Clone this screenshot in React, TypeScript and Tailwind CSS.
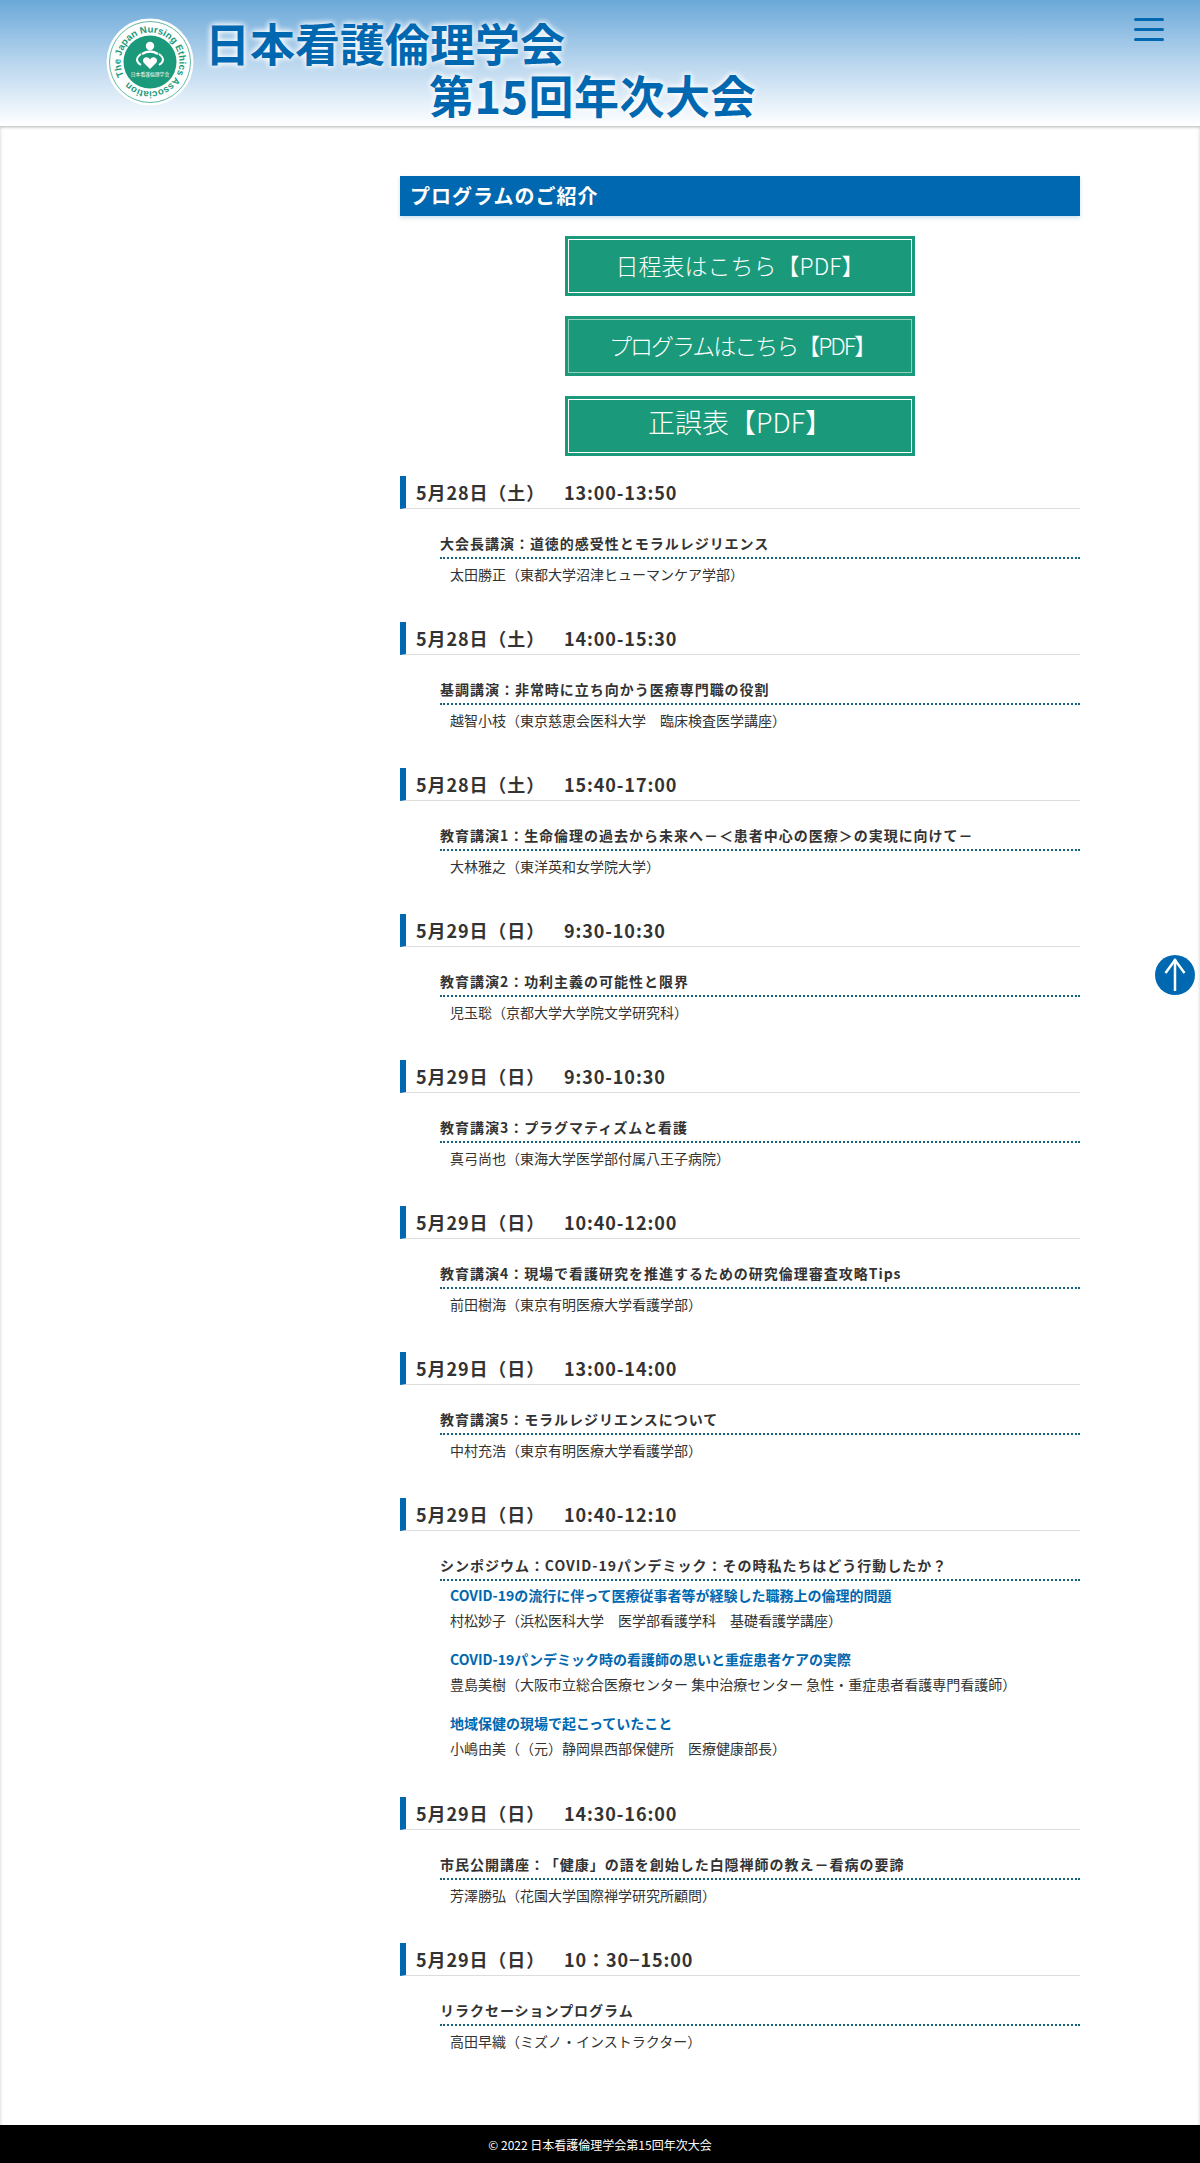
import React from "react";

type Talk = {
  title: string;
  name: string;
};

type Session = {
  date: string;
  time: string;
  title: string;
  name?: string;
  talks?: Talk[];
};

const sessions: Session[] = [
  { date: "5月28日（土）", time: "13:00-13:50", title: "大会長講演：道徳的感受性とモラルレジリエンス", name: "太田勝正（東都大学沼津ヒューマンケア学部）" },
  { date: "5月28日（土）", time: "14:00-15:30", title: "基調講演：非常時に立ち向かう医療専門職の役割", name: "越智小枝（東京慈恵会医科大学　臨床検査医学講座）" },
  { date: "5月28日（土）", time: "15:40-17:00", title: "教育講演1：生命倫理の過去から未来へ－＜患者中心の医療＞の実現に向けて－", name: "大林雅之（東洋英和女学院大学）" },
  { date: "5月29日（日）", time: "9:30-10:30", title: "教育講演2：功利主義の可能性と限界", name: "児玉聡（京都大学大学院文学研究科）" },
  { date: "5月29日（日）", time: "9:30-10:30", title: "教育講演3：プラグマティズムと看護", name: "真弓尚也（東海大学医学部付属八王子病院）" },
  { date: "5月29日（日）", time: "10:40-12:00", title: "教育講演4：現場で看護研究を推進するための研究倫理審査攻略Tips", name: "前田樹海（東京有明医療大学看護学部）" },
  { date: "5月29日（日）", time: "13:00-14:00", title: "教育講演5：モラルレジリエンスについて", name: "中村充浩（東京有明医療大学看護学部）" },
  {
    date: "5月29日（日）",
    time: "10:40-12:10",
    title: "シンポジウム：COVID-19パンデミック：その時私たちはどう行動したか？",
    talks: [
      { title: "COVID-19の流行に伴って医療従事者等が経験した職務上の倫理的問題", name: "村松妙子（浜松医科大学　医学部看護学科　基礎看護学講座）" },
      { title: "COVID-19パンデミック時の看護師の思いと重症患者ケアの実際", name: "豊島美樹（大阪市立総合医療センター 集中治療センター 急性・重症患者看護専門看護師）" },
      { title: "地域保健の現場で起こっていたこと", name: "小嶋由美（（元）静岡県西部保健所　医療健康部長）" },
    ],
  },
  { date: "5月29日（日）", time: "14:30-16:00", title: "市民公開講座：「健康」の語を創始した白隠禅師の教え－看病の要諦", name: "芳澤勝弘（花園大学国際禅学研究所顧問）" },
  { date: "5月29日（日）", time: "10：30−15:00", title: "リラクセーションプログラム", name: "高田早織（ミズノ・インストラクター）" },
];

function Logo() {
  return (
    <svg width="88" height="88" viewBox="0 0 88 88" className="shrink-0">
      <defs>
        <path id="ring" d="M 18.5 58.5 A 29.3 29.3 0 1 1 69.5 29.5 A 29.3 29.3 0 0 1 18.5 58.5" />
      </defs>
      <circle cx="44" cy="44" r="43.5" fill="#fff" />
      <circle cx="44" cy="44" r="40.5" fill="none" stroke="#1a9a7a" strokeWidth="0.7" />
      <circle cx="44" cy="44" r="26.5" fill="#1a9a7a" />
      <text fontSize="9.6" fontWeight="700" fill="#1a9a7a" fontFamily="'Liberation Sans', sans-serif">
        <textPath href="#ring" startOffset="1" textLength="176">The Japan Nursing Ethics Association</textPath>
      </text>
      <circle cx="44" cy="28" r="4.2" fill="#fff" />
      <path d="M36 36 Q44 31 52 36" fill="none" stroke="#fff" strokeWidth="2.5" />
      <path d="M35 36 Q27 42 35 47 M53 36 Q61 42 53 47" fill="none" stroke="#fff" strokeWidth="2" />
      <path d="M44 51 L37.5 44.5 Q36 41 39 39.5 Q42.5 38.5 44 41.5 Q45.5 38.5 49 39.5 Q52 41 50.5 44.5 Z" fill="#fff" />
      <text x="44" y="58" fontSize="4.8" fill="#fff" textAnchor="middle" fontFamily="'Noto Sans CJK JP', sans-serif">日本看護倫理学会</text>
    </svg>
  );
}

function SessionBlock({ session }: { session: Session }) {
  return (
    <section className="mb-[33px]">
      <h3 className="h-[33px] border-l-[6px] border-b border-l-[#0068b0] border-b-[#dddddd] pl-[10px] text-[18px] leading-[33px] font-bold tracking-[0.05em] text-[#333333] whitespace-pre">
        {session.date}　{session.time}
      </h3>
      <div className="ml-10 pt-[20px]">
        <h4 className="h-[30px] border-b-2 border-dotted border-b-[#16637f] text-[14px] leading-[29px] font-bold tracking-[0.07em] text-[#333333]">
          {session.title}
        </h4>
        {session.name && <p className="pl-[10px] pt-[1px] pb-[1px] text-[14px] leading-[28px] text-[#333333]">{session.name}</p>}
        {session.talks && (
          <div className="flex flex-col gap-[14px] pl-[10px] pt-[2px] pb-[3px]">
            {session.talks.map((talk) => (
              <div key={talk.title}>
                <p className="text-[14px] leading-[25px] font-bold text-[#0068b0]">{talk.title}</p>
                <p className="text-[14px] leading-[25px] text-[#333333]">{talk.name}</p>
              </div>
            ))}
          </div>
        )}
      </div>
    </section>
  );
}

export default function App() {
  return (
    <div className="relative bg-white font-['Noto_Sans_CJK_JP','Noto_Sans',sans-serif] [text-spacing-trim:space-all]">
      <header className="relative z-10 flex h-[126px] items-start justify-between bg-gradient-to-b from-[#6aa8d8] via-[#b9d6ee] to-white pt-[18px] pl-[106px] pr-[36px] shadow-[0_1px_3px_rgba(0,0,0,0.3)]">
        <div className="flex items-start gap-[11px]">
          <Logo />
          <h1 className="w-[580px] text-[45px] leading-[52px] font-bold text-[#0068b0] [text-shadow:0_0_6px_#fff,0_0_6px_#fff]">
            <div className="-mt-[1px]">日本看護倫理学会</div>
            <div className="pl-[224px] tracking-[0.5px]">第15回年次大会</div>
          </h1>
        </div>
        <button className="flex w-[30px] flex-col gap-[7px]">
          <span className="h-[3px] rounded-full bg-[#0068b0]" />
          <span className="h-[3px] rounded-full bg-[#0068b0]" />
          <span className="h-[3px] rounded-full bg-[#0068b0]" />
        </button>
      </header>

      <main className="grid grid-cols-[400px_680px] pt-[50px] pb-[36px] shadow-[inset_3px_0_3px_-2px_rgba(0,0,0,0.12),inset_-3px_0_3px_-2px_rgba(0,0,0,0.12)]">
        <div />
        <div>
          <h2 className="h-10 bg-[#0068b0] pl-[10px] text-[20px] leading-10 font-bold tracking-[0.05em] text-white shadow-[0_2px_4px_rgba(0,104,176,0.2)]">
            プログラムのご紹介
          </h2>
          <div className="flex flex-col items-center gap-5 py-5">
            <a href="#" className="flex h-[60px] w-[350px] items-center justify-center border-2 border-[#1a9a7a] bg-[#1a9a7a] pb-[2px] text-[23px] font-light text-white outline-1 -outline-offset-4 outline-white">
              日程表はこちら【PDF】
            </a>
            <a href="#" className="flex h-[60px] w-[350px] items-center justify-center border-2 border-[#1a9a7a] bg-[#1a9a7a] pb-[2px] pl-[4px] text-[23px] font-light tracking-[-2px] text-white outline-1 -outline-offset-4 outline-[#8fd0bd] [text-spacing-trim:normal]">
              プログラムはこちら【PDF】
            </a>
            <a href="#" className="flex h-[60px] w-[350px] items-center justify-center border-2 border-[#1a9a7a] bg-[#1a9a7a] pb-[8px] text-[27px] font-light text-white outline-1 -outline-offset-4 outline-white">
              正誤表【PDF】
            </a>
          </div>
          {sessions.map((session) => (
            <SessionBlock key={session.title} session={session} />
          ))}
        </div>
      </main>

      <footer className="h-[39px] bg-black text-center text-[12px] leading-[39px] text-white">
        © 2022 日本看護倫理学会第15回年次大会
      </footer>

      <a href="#" className="absolute top-[955px] left-[1155px] flex h-10 w-10 items-center justify-center rounded-full bg-[#0068b0]">
        <svg width="40" height="40" viewBox="0 0 40 40" fill="none" stroke="#fff" strokeWidth="2.5">
          <path d="M20 4 V36" />
          <path d="M10.5 18 L20 5 L29.5 18" />
        </svg>
      </a>
    </div>
  );
}
